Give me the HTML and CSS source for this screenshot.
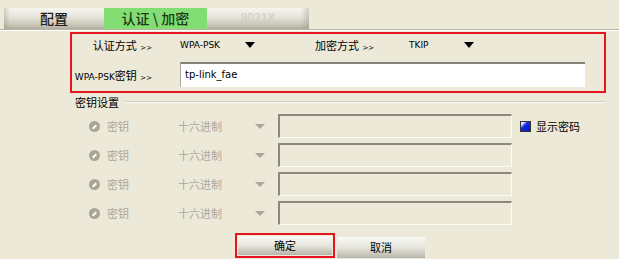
FILE: index.html
```html
<!DOCTYPE html>
<html>
<head>
<meta charset="utf-8">
<link rel="stylesheet" href="styles.css">
</head>
<body>
<div class="page">
  <div class="tabbar">
    <div class="tab tab-gray">配置</div>
    <div class="tab tab-green">认证 \ 加密</div>
    <div class="tab tab-gray tab-dim">8021X</div>
  </div>

  <div class="auth">
    <div class="auth-row">
      <div class="lbl">认证方式 <span class="gt">&gt;&gt;</span></div>
      <div class="val">WPA-PSK</div>
      <div class="arrow"></div>
      <div class="lbl lbl2">加密方式 <span class="gt">&gt;&gt;</span></div>
      <div class="val val2">TKIP</div>
      <div class="arrow"></div>
    </div>
    <div class="auth-row row2">
      <div class="lbl"><span class="lat">WPA-PSK</span>密钥 <span class="gt">&gt;&gt;</span></div>
      <div class="pskinput">tp-link_fae</div>
    </div>
  </div>

  <div class="keys">
    <div class="legend"><span>密钥设置</span><div class="rule"></div></div>
    <div class="keyrow">
      <div class="radio"></div><div class="klbl">密钥</div><div class="ktype">十六进制</div><div class="darrow"></div><div class="kinput"></div>
      <div class="chk"></div><div class="chklbl">显示密码</div>
    </div>
    <div class="keyrow">
      <div class="radio"></div><div class="klbl">密钥</div><div class="ktype">十六进制</div><div class="darrow"></div><div class="kinput"></div>
    </div>
    <div class="keyrow">
      <div class="radio"></div><div class="klbl">密钥</div><div class="ktype">十六进制</div><div class="darrow"></div><div class="kinput"></div>
    </div>
    <div class="keyrow">
      <div class="radio"></div><div class="klbl">密钥</div><div class="ktype">十六进制</div><div class="darrow"></div><div class="kinput"></div>
    </div>
  </div>

  <div class="buttons">
    <div class="okwrap"><div class="btn">确定</div></div>
    <div class="btn btn-cancel">取消</div>
  </div>
</div>
</body>
</html>
```
FILE: styles.css
```css
html, body {
  margin: 0;
  padding: 0;
  background: #ece9d9;
  width: 619px;
  height: 259px;
  overflow: hidden;
  font-family: "Noto Sans CJK SC", "DejaVu Sans", sans-serif;
  color: #000;
}
.page {
  display: flex;
  flex-direction: column;
  padding-top: 8px;
}
.tabbar {
  display: flex;
  height: 21px;
  padding-left: 4px;
  border-bottom: 1px solid #b8b5a6;
  box-shadow: 0 1px 0 #ffffff;
}
.tab {
  height: 21px;
  line-height: 21px;
  text-align: center;
  font-size: 14px;
  font-weight: 500;
  color: #222;
}
.tab-gray {
  width: 100px;
  background: linear-gradient(to bottom, #f6f5f0 0%, #e4e2d8 45%, #c9c6b8 80%, #b2afa1 100%);
}
.tab-gray:first-child {
  background: linear-gradient(to right, rgba(140,138,125,0.35), rgba(0,0,0,0) 6%),
              linear-gradient(to bottom, #f6f5f0 0%, #e4e2d8 45%, #c9c6b8 80%, #b2afa1 100%);
}
.tab-green {
  width: 103px;
  background: #82de73;
  color: #1d3a18;
}
.tab-dim {
  width: 102px;
  color: #cfccbf;
  font-family: "Liberation Sans", sans-serif;
  font-size: 12px;
  font-weight: normal;
  background: linear-gradient(to left, rgba(140,138,125,0.35), rgba(0,0,0,0) 8%),
              linear-gradient(to bottom, #f6f5f0 0%, #e4e2d8 45%, #c9c6b8 80%, #b2afa1 100%);
}
.auth {
  margin: 2px 0 0 70px;
  width: 536px;
  height: 61px;
  box-sizing: border-box;
  border: 2px solid #e3161d;
  display: flex;
  flex-direction: column;
}
.auth-row {
  display: flex;
  align-items: center;
  height: 22px;
}
.row2 {
  margin-top: 6px;
  height: 25px;
}
.lbl {
  width: 80px;
  text-align: right;
  font-size: 11px;
  white-space: nowrap;
}
.lat {
  font-family: "DejaVu Sans", sans-serif;
  font-size: 9px;
}
.gt {
  font-family: "DejaVu Sans", sans-serif;
  font-size: 7px;
  margin-left: 1px;
}
.val {
  margin-left: 28px;
  width: 65px;
  font-family: "DejaVu Sans", sans-serif;
  font-size: 9px;
}
.arrow {
  width: 0;
  height: 0;
  border-left: 5px solid transparent;
  border-right: 5px solid transparent;
  border-top: 6px solid #000;
}
.lbl2 {
  margin-left: 60px;
  width: 58px;
}
.val2 {
  margin-left: 36px;
  width: 55px;
}
.pskinput {
  margin-left: 28px;
  width: 405px;
  height: 25px;
  box-sizing: border-box;
  background: #fff;
  border-top: 2px solid #86847a;
  border-left: 1px solid #a8a699;
  padding-left: 4px;
  line-height: 22px;
  font-family: "DejaVu Sans", sans-serif;
  font-size: 10px;
}
.keys {
  display: flex;
  flex-direction: column;
  padding-left: 75px;
}
.legend {
  display: flex;
  align-items: center;
  height: 17px;
  margin-top: 0px;
  font-size: 11px;
}
.rule {
  margin-left: 6px;
  width: 480px;
  height: 1px;
  background: #d0cec0;
  border-bottom: 1px solid #fbfaf6;
}
.keyrow {
  display: flex;
  align-items: center;
  height: 24px;
  margin-top: 5px;
  font-size: 11px;
  color: #aca899;
}
.keyrow:nth-child(2) {
  margin-top: 4px;
}
.radio {
  margin-left: 14px;
  width: 11px;
  height: 11px;
  border-radius: 50%;
  background: #aaa697;
  position: relative;
}
.radio::after {
  content: "";
  position: absolute;
  left: 3px;
  top: 5px;
  width: 5px;
  height: 2px;
  background: #fff;
  transform: rotate(-45deg);
}
.klbl {
  margin-left: 7px;
  width: 71px;
}
.ktype {
  width: 77px;
}
.darrow {
  width: 0;
  height: 0;
  border-left: 5px solid transparent;
  border-right: 5px solid transparent;
  border-top: 5px solid #aca899;
}
.kinput {
  margin-left: 13px;
  width: 234px;
  height: 24px;
  box-sizing: border-box;
  border-top: 2px solid #8c897c;
  border-left: 2px solid #8c897c;
  border-right: 1px solid #fbfaf4;
  border-bottom: 1px solid #fbfaf4;
}
.chk {
  margin-left: 8px;
  width: 11px;
  height: 11px;
  box-sizing: border-box;
  border: 1px solid #333;
  background: linear-gradient(135deg, #ffffff 0%, #bfc8ff 22%, #1a2ee0 38%, #0010c8 100%);
}
.chklbl {
  margin-left: 5px;
  font-size: 11px;
  color: #000;
}
.buttons {
  display: flex;
  align-items: flex-end;
  margin-top: 8px;
  padding-left: 235px;
}
.okwrap {
  border: 2px solid #e3161d;
  padding: 1px;
  width: 100px;
  height: 25px;
  box-sizing: border-box;
  display: flex;
}
.btn {
  width: 100%;
  height: 19px;
  align-self: flex-end;
  text-align: center;
  font-size: 11px;
  line-height: 19px;
  background: linear-gradient(to bottom, #fafaf6 0%, #e6e5dc 50%, #b8b6a9 100%);
}
.btn-cancel {
  margin-left: 2px;
  width: 88px;
  height: 21px;
  line-height: 21px;
}
```
